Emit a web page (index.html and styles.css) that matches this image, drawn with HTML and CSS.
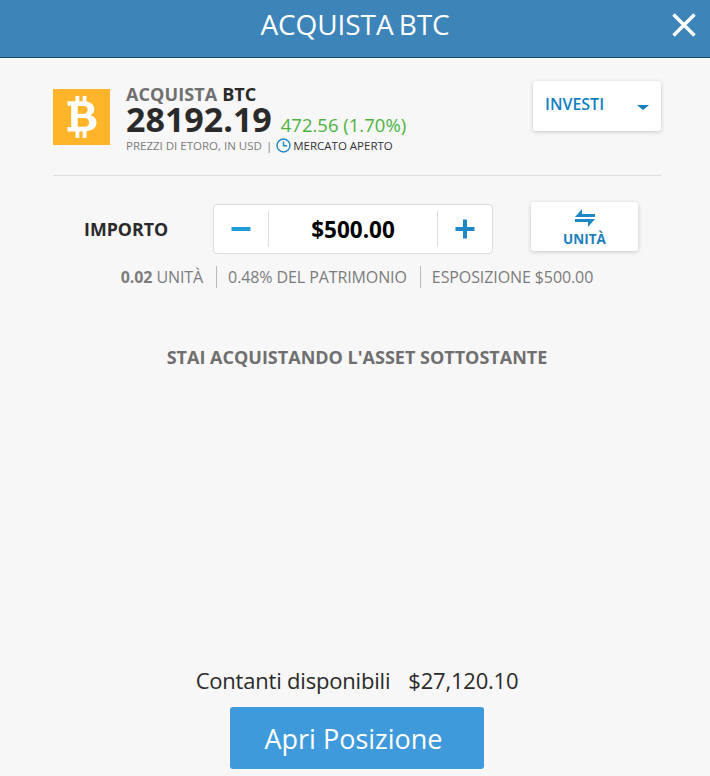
FILE: index.html
```html
<!DOCTYPE html>
<html lang="en">
<head>
  <meta charset="UTF-8">
  <meta name="viewport" content="width=device-width, initial-scale=1.0">
  <title>Acquista BTC</title>
  <link rel="stylesheet" href="styles.css">
</head>
<body>
  <div class="navbar">
    <h1>ACQUISTA BTC</h1>
    <button class="close" type="button" aria-label="Chiudi">
      <svg width="24" height="24" viewBox="0 0 24 24"><path d="M1.500 1.500L22.500 22.500M22.500 1.500L1.500 22.500" stroke="#fff" stroke-width="3.400" fill="none"/></svg>
    </button>
  </div>

  <div class="container">
    <div class="instrument">
      <div class="coin">
        <svg width="31" height="42" viewBox="0 0 31 42">
          <path fill="#fff" fill-rule="evenodd" d="M8.500 0h3.800v5.200h3.400V0h3.800v5.500c4.900.8 7.800 3.600 7.800 7.600 0 2.900-1.400 5-3.900 6.100 3.800 1 6.100 3.600 6.100 7.400 0 5.100-3.600 8.200-10 8.600V42h-3.800v-6.600h-3.400V42H8.500v-6.600H.5v-4.300h3.700V9.800H.5V5.200h8V0zm2.200 10v7.700h5.800c2.600 0 4.100-1.400 4.100-3.900S19.100 10 16.500 10h-5.800zm0 12v8.800h6.700c3 0 4.700-1.600 4.700-4.400S20.400 22 17.400 22h-6.700z"/>
        </svg>
      </div>
      <div class="quote">
        <div class="quote-title">ACQUISTA <span>BTC</span></div>
        <div class="quote-price">
          <span class="price">28192.19</span>
          <span class="change">472.56 (1.70%)</span>
        </div>
        <div class="quote-note">
          PREZZI DI ETORO, IN USD <span class="pipe">|</span>
          <svg width="15" height="15" viewBox="0 0 15 15"><circle cx="7.500" cy="7.500" r="6.500" fill="none" stroke="#1e88c7" stroke-width="1.400"/><path d="M7.500 3.500v4.300h3.600" fill="none" stroke="#1e88c7" stroke-width="1.400"/></svg>
          <span class="open">MERCATO APERTO</span>
        </div>
      </div>
      <div class="dropdown">
        <span>INVESTI</span>
        <i class="caret"></i>
      </div>
    </div>

    <div class="amount-row">
      <div class="amount-label">IMPORTO</div>
      <div class="stepper">
        <button class="step minus" type="button">
          <svg width="20" height="20" viewBox="0 0 20 20"><rect x="0.500" y="8" width="19" height="4" fill="#1f9bd8"/></svg>
        </button>
        <div class="amount">$500.00</div>
        <button class="step plus" type="button">
          <svg width="20" height="20" viewBox="0 0 20 20"><path d="M8 .5h4V8h7.500v4H12v7.500H8V12H.5V8H8z" fill="#1e88c7"/></svg>
        </button>
      </div>
      <button class="switch" type="button">
        <svg width="22" height="18" viewBox="0 0 22 18"><path d="M8 0v5h13v3H1L8 0zM14 18v-5H1v-3h20L14 18z" fill="#1e88c7"/></svg>
        <span>UNITÀ</span>
      </button>
    </div>

    <div class="stats">
      <span><b>0.02</b> UNITÀ</span>
      <span>0.48% DEL PATRIMONIO</span>
      <span>ESPOSIZIONE $500.00</span>
    </div>

    <p class="message">STAI ACQUISTANDO L'ASSET SOTTOSTANTE</p>

    <div class="footer">
      <div class="cash"><span>Contanti disponibili</span><span>$27,120.10</span></div>
      <button class="open-btn" type="button">Apri Posizione</button>
    </div>
  </div>
</body>
</html>
```

FILE: styles.css
```css
html, body {
  height: 100%;
}

body {
  font-family: "Open Sans", sans-serif;
  background-color: #f7f7f7;
  color: #2a2a2a;
  margin: 0;
  padding: 0;
  display: flex;
  flex-direction: column;
}

button {
  font-family: inherit;
  border: none;
  padding: 0;
  cursor: pointer;
}

.navbar {
  background-color: #3d84b8;
  border-bottom: 1px solid #1b4568;
  height: 57px;
  display: flex;
  align-items: center;
  justify-content: center;
  position: relative;
  flex: none;
}

.navbar h1 {
  color: #fff;
  margin: 0 0 10px;
  font-size: 28px;
  font-weight: 400;
  letter-spacing: -0.1px;
  word-spacing: -2px;
}

.close {
  position: absolute;
  right: 14px;
  top: 13px;
  background: none;
  display: flex;
}

.container {
  flex: 1;
  display: flex;
  flex-direction: column;
  padding: 23px 49px 7px 53px;
  min-height: 0;
}

/* Instrument header */
.instrument {
  display: flex;
  align-items: flex-start;
  width: 608px;
  height: 94px;
  border-bottom: 1px solid #dedede;
}

.coin {
  width: 57px;
  height: 56px;
  margin-top: 8px;
  padding-left: 2px;
  box-sizing: border-box;
  background-color: #ffb42a;
  display: flex;
  align-items: center;
  justify-content: center;
}

.quote {
  margin-left: 16px;
  flex: 1;
}

.quote-title {
  font-size: 18px;
  font-weight: 700;
  line-height: 22px;
  margin-top: 2px;
  color: #6f6f6f;
  letter-spacing: 0.1px;
}

.quote-title span {
  color: #2a2a2a;
}

.quote-price {
  display: flex;
  align-items: baseline;
  gap: 9px;
  line-height: 34px;
  margin-top: -3px;
}

.price {
  font-size: 34px;
  font-weight: 700;
}

.change {
  font-size: 18.500px;
  color: #4cb33f;
}

.quote-note {
  display: flex;
  align-items: center;
  gap: 4px;
  font-size: 11.500px;
  color: #7c7c7c;
  line-height: 15px;
  margin-top: -4px;
}

.quote-note svg {
  margin-right: -2px;
}

.open {
  color: #333;
}

.dropdown {
  width: 128px;
  height: 50px;
  background-color: #fff;
  border-radius: 3px;
  box-shadow: 0 1px 4px rgba(0, 0, 0, 0.2);
  display: flex;
  align-items: center;
  justify-content: space-between;
  padding: 0 12px;
  box-sizing: border-box;
  color: #0f7fc0;
  font-size: 16px;
  font-weight: 600;
}

.dropdown span {
  margin-bottom: 5px;
}

.caret {
  border-left: 6px solid transparent;
  border-right: 6px solid transparent;
  border-top: 5px solid #0f7fc0;
  margin-top: 3px;
}

/* Amount row */
.amount-row {
  display: flex;
  align-items: flex-start;
  margin-top: 26px;
  width: 608px;
}

.amount-label {
  width: 160px;
  padding-left: 31px;
  padding-top: 16px;
  box-sizing: border-box;
  font-size: 17.800px;
  font-weight: 700;
  line-height: 23px;
}

.stepper {
  width: 280px;
  height: 50px;
  margin-top: 2px;
  background-color: #fff;
  border: 1px solid #ddd;
  border-radius: 4px;
  box-sizing: border-box;
  display: flex;
  align-items: center;
}

.step {
  width: 55px;
  height: 36px;
  background: none;
  display: flex;
  align-items: center;
  justify-content: center;
  flex: none;
}

.minus {
  border-right: 1px solid #ddd;
}

.plus {
  border-left: 1px solid #ddd;
}

.amount {
  flex: 1;
  text-align: center;
  font-size: 22.500px;
  font-weight: 700;
  color: #000;
}

.switch {
  width: 107px;
  height: 49px;
  margin-left: 38px;
  background-color: #fff;
  border-radius: 3px;
  box-shadow: 0 1px 4px rgba(0, 0, 0, 0.2);
  display: flex;
  flex-direction: column;
  align-items: center;
  color: #1e7fbe;
  font-size: 13.500px;
  font-weight: 700;
  padding-top: 7px;
  box-sizing: border-box;
  line-height: 18px;
}

.switch span {
  margin-top: 3px;
}

.stats {
  display: flex;
  justify-content: center;
  margin-top: 12px;
  margin-left: 1px;
  width: 608px;
  color: #7c7c7c;
  font-size: 16px;
  letter-spacing: -0.1px;
  line-height: 22px;
}

.stats span {
  padding: 0 13px 0 11px;
  border-left: 1px solid #bbb;
}

.stats span:first-child {
  border-left: none;
}

.message {
  margin: 58px 0 0;
  width: 608px;
  text-align: center;
  font-size: 18px;
  font-weight: 700;
  line-height: 22px;
  color: #6f6f6f;
}

.footer {
  margin-top: auto;
  display: flex;
  flex-direction: column;
  align-items: center;
  width: 608px;
}

.cash {
  display: flex;
  gap: 18px;
  font-size: 22px;
  line-height: 28px;
  letter-spacing: -0.2px;
  margin-bottom: 3px;
}

.open-btn {
  width: 254px;
  height: 62px;
  margin-top: 10px;
  background-color: #3f9adb;
  color: #fff;
  border-radius: 3px;
  font-size: 27px;
  padding-right: 7px;
}
```
